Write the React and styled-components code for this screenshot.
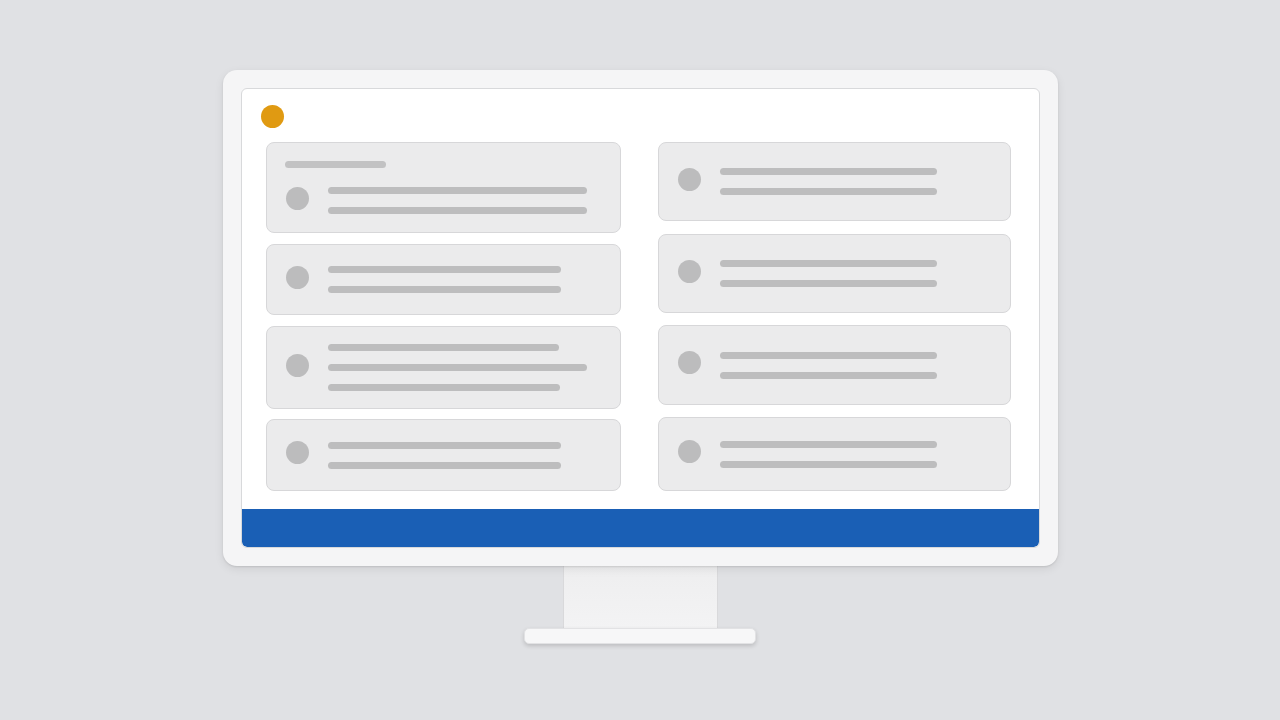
import React from 'react'
import styled, { createGlobalStyle } from 'styled-components'

const Global = createGlobalStyle`
  html, body {
    margin: 0;
    height: 100%;
    background: #e0e1e4;
    font-family: "Liberation Sans", Arial, sans-serif;
  }
`;

const Page = styled.div`
  width: 1280px;
  height: 720px;
  display: flex;
  flex-direction: column;
  align-items: center;
  padding-top: 70px;
  box-sizing: border-box;
`;

const Monitor = styled.div`
  width: 835px;
  height: 496px;
  box-sizing: border-box;
  padding: 18px;
  background: #f5f5f6;
  border-radius: 14px;
  box-shadow: 0 1px 2px rgba(0, 0, 0, 0.10), 0 3px 10px rgba(0, 0, 0, 0.08);
  position: relative;
  z-index: 1;
`;

const Screen = styled.div`
  height: 100%;
  box-sizing: border-box;
  border: 1px solid #d8d9db;
  border-radius: 6px;
  background: #ffffff;
  display: flex;
  flex-direction: column;
  overflow: hidden;
`;

const Content = styled.div`
  flex: 1;
  padding: 16px 28px 0 24px;
  display: flex;
  flex-direction: column;
`;

const StatusDot = styled.div`
  width: 23px;
  height: 23px;
  border-radius: 50%;
  background: #e09a12;
  margin-left: -5px;
`;

const Columns = styled.div`
  margin-top: 14px;
  display: flex;
  gap: 37px;
`;

const Column = styled.div`
  width: ${p => p.$w}px;
  display: flex;
  flex-direction: column;
`;

const Card = styled.div`
  height: ${p => p.$h}px;
  margin-top: ${p => p.$gap || 0}px;
  box-sizing: border-box;
  background: #ebebec;
  border: 1px solid #d7d7d9;
  border-radius: 8px;
  padding: 0 18px 0 19px;
  display: flex;
  flex-direction: column;
  justify-content: center;
  gap: 19px;
`;

const Heading = styled.div`
  width: 101px;
  height: 7px;
  margin-left: -1px;
  border-radius: 4px;
  background: #c2c2c3;
`;

const Row = styled.div`
  display: flex;
  align-items: center;
  gap: 19px;
`;

const Avatar = styled.div`
  flex: none;
  width: 23px;
  height: 23px;
  border-radius: 50%;
  background: #bcbcbd;
  margin-bottom: 5px;
`;

const Lines = styled.div`
  display: flex;
  flex-direction: column;
  gap: 13px;
`;

const Line = styled.div`
  width: ${p => p.$w}px;
  height: 7px;
  border-radius: 4px;
  background: #bdbdbe;
`;

const Taskbar = styled.div`
  height: 38px;
  flex: none;
  background: #1a5fb5;
  border-radius: 0 0 5px 5px;
`;

const Neck = styled.div`
  width: 155px;
  height: 64px;
  margin-top: -1px;
  box-sizing: border-box;
  background: linear-gradient(180deg, #eeeeef 0%, #f3f3f4 100%);
  border-left: 1px solid #d9d9db;
  border-right: 1px solid #d9d9db;
`;

const Base = styled.div`
  width: 232px;
  height: 16px;
  margin-top: -1px;
  box-sizing: border-box;
  background: #f7f7f8;
  border: 1px solid #e2e2e4;
  border-radius: 5px;
  box-shadow: 0 2px 4px rgba(0, 0, 0, 0.16);
`;

const leftCards = [
  { h: 91, heading: true, lines: [259, 259] },
  { h: 71, gap: 11, lines: [233, 233] },
  { h: 83, gap: 11, lines: [231, 259, 232] },
  { h: 72, gap: 10, lines: [233, 233] },
];

const rightCards = [
  { h: 79, lines: [217, 217] },
  { h: 79, gap: 13, lines: [217, 217] },
  { h: 80, gap: 12, lines: [217, 217] },
  { h: 74, gap: 12, lines: [217, 217] },
];

const ListCard = ({ card }) => (
  <Card $h={card.h} $gap={card.gap}>
    {card.heading && <Heading />}
    <Row>
      <Avatar />
      <Lines>
        {card.lines.map((w, i) => <Line key={i} $w={w} />)}
      </Lines>
    </Row>
  </Card>
);

const App = () => (
  <Page>
    <Global />
    <Monitor>
      <Screen>
        <Content>
          <StatusDot />
          <Columns>
            <Column $w={356}>
              {leftCards.map((c, i) => <ListCard key={i} card={c} />)}
            </Column>
            <Column $w={354}>
              {rightCards.map((c, i) => <ListCard key={i} card={c} />)}
            </Column>
          </Columns>
        </Content>
        <Taskbar />
      </Screen>
    </Monitor>
    <Neck />
    <Base />
  </Page>
);

export default App
